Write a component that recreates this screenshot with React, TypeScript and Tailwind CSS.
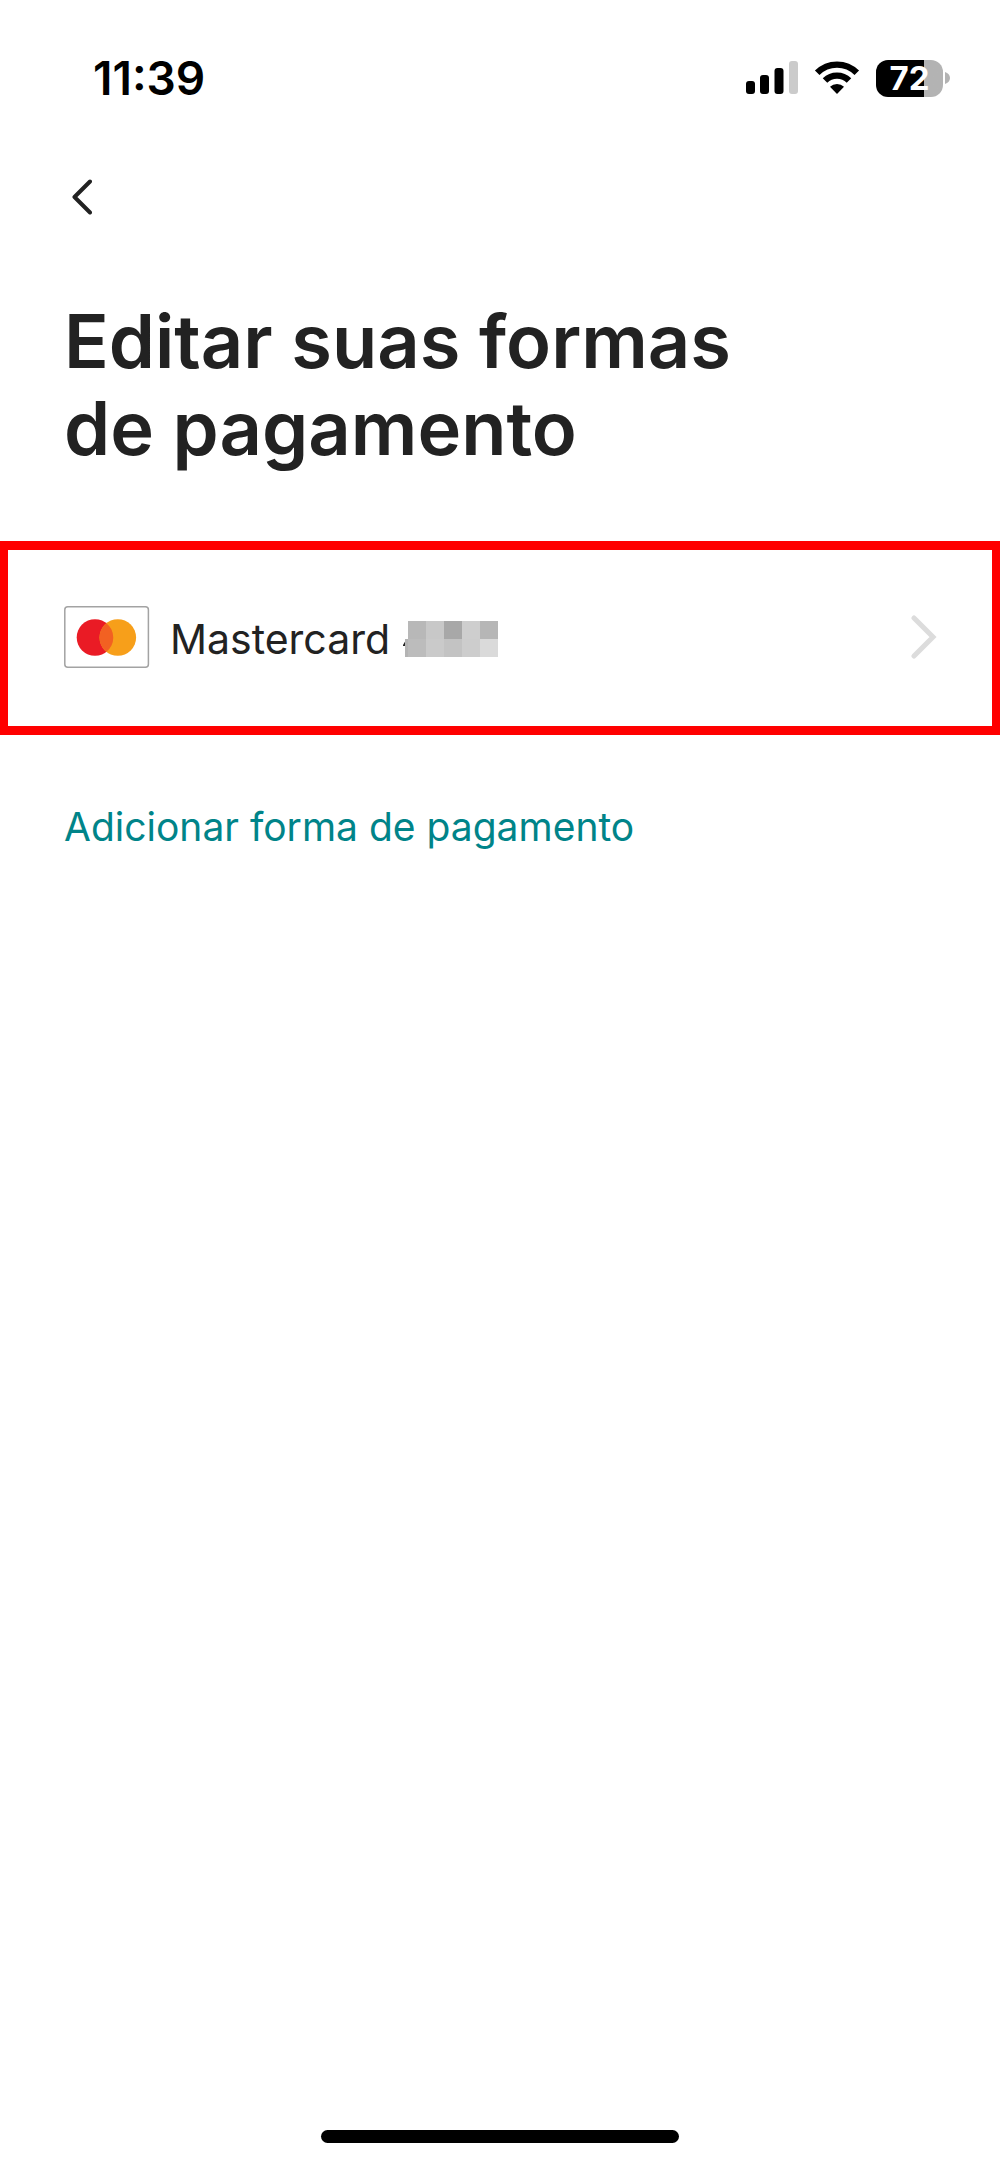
const MASK_CELLS = [
  "bg-[#b8b8b8]", "bg-[#c8c8c8]", "bg-[#a8a8a8]", "bg-[#cecece]", "bg-[#b6b6b6]",
  "bg-[#bcbcbc]", "bg-[#cacaca]", "bg-[#c3c3c3]", "bg-[#cdcdcd]", "bg-[#dadada]",
];

function SignalIcon() {
  return (
    <svg width="52" height="34" viewBox="0 0 52 34" aria-hidden="true">
      <rect x="0" y="20" width="9" height="13" rx="3" fill="#000" />
      <rect x="14" y="14" width="9" height="19" rx="3" fill="#000" />
      <rect x="28.5" y="7" width="9" height="26" rx="3" fill="#000" />
      <rect x="43" y="0" width="9" height="33" rx="3" fill="#cbcbcb" />
    </svg>
  );
}

function WifiIcon() {
  return (
    <svg width="46" height="34" viewBox="0 0 46 34" aria-hidden="true">
      <path d="M3.2 11.8a28 28 0 0 1 39.6 0" fill="none" stroke="#000" strokeWidth="6.4" />
      <path d="M11 19.6a17 17 0 0 1 24 0" fill="none" stroke="#000" strokeWidth="6.4" />
      <path d="M23 33l-7-7.2a10 10 0 0 1 14 0z" fill="#000" />
    </svg>
  );
}

function Battery({ level }: { level: number }) {
  return (
    <div className="flex items-center gap-0.5">
      <div className="grid h-[37px] w-[67px] items-center rounded-xl bg-linear-to-r from-black from-72% to-[#b3b3b3] to-72%">
        <span className="text-center text-[33px] leading-[37px] font-bold text-white">{level}</span>
      </div>
      <svg width="5" height="12" viewBox="0 0 5 12" aria-hidden="true">
        <path d="M0 0c3 1 5 3 5 6s-2 5-5 6z" fill="#b3b3b3" />
      </svg>
    </div>
  );
}

function StatusBar() {
  return (
    <div className="flex items-center justify-between pr-[50px] pl-[93px] pt-[50px]">
      <span className="text-[46px] leading-[56px] font-semibold text-black">11:39</span>
      <div className="flex items-center gap-4">
        <SignalIcon />
        <WifiIcon />
        <Battery level={72} />
      </div>
    </div>
  );
}

function MastercardIcon() {
  return (
    <svg width="86" height="62" viewBox="0 0 86 62" className="shrink-0" aria-hidden="true">
      <rect x="0.8" y="0.8" width="83.6" height="60.4" rx="3" fill="#fff" stroke="#a3a3a3" strokeWidth="1.5" />
      <circle cx="31" cy="31.5" r="18.3" fill="#ea1b25" />
      <circle cx="53.8" cy="31.5" r="18.3" fill="#f79f1a" />
      <path d="M42.4 17.2a18.3 18.3 0 0 1 0 28.6a18.3 18.3 0 0 1 0-28.6z" fill="#f26122" />
    </svg>
  );
}

function MaskedNumber() {
  return (
    <span className="relative grid grid-cols-5" aria-hidden="true">
      {MASK_CELLS.map((cell, i) => (
        <span key={i} className={`h-[18px] w-[18px] ${cell}`} />
      ))}
      <svg width="5" height="18" viewBox="0 0 5 18" className="absolute bottom-0 -left-[5px]">
        <path d="M0 6L3 1V7H0z" fill="#222" />
        <path d="M2 0H5V18H2z" fill="#b4b4b4" />
      </svg>
    </span>
  );
}

export default function App() {
  return (
    <div className="flex min-h-screen flex-col bg-white font-['Inter',sans-serif] text-[#222]">
      <StatusBar />

      <header className="px-16 pt-[66px]">
        <button type="button" aria-label="Voltar" className="flex h-[50px] w-9 items-center justify-center">
          <svg width="20" height="36" viewBox="0 0 20 36" fill="none" stroke="#222" strokeWidth="4" strokeLinecap="round" strokeLinejoin="round">
            <path d="M18 2.5L2.5 18L18 33.5" />
          </svg>
        </button>
        <h1 className="mt-[76px] text-[74px] leading-[87px] font-semibold">
          Editar suas formas
          <br />
          de pagamento
        </h1>
      </header>

      <main className="mt-[69px] flex flex-1 flex-col">
        <button type="button" className="flex h-[194px] items-center border-x-8 border-y-9 border-[#ff0000] pr-[54px] pb-0.5 pl-14 text-left">
          <MastercardIcon />
          <span className="ml-5 pt-1 text-[41px] leading-[56px]">Mastercard</span>
          <span className="ml-[18px] pt-1">
            <MaskedNumber />
          </span>
          <svg width="28" height="44" viewBox="0 0 28 44" fill="none" stroke="#dcdcdc" strokeWidth="5" strokeLinecap="round" strokeLinejoin="miter" className="ml-auto">
            <path d="M4 3L23 22L4 41" />
          </svg>
        </button>
        <a href="#adicionar" className="mx-16 mt-16 self-start text-[39px] leading-[56px] text-[#008489]">
          Adicionar forma de pagamento
        </a>
      </main>

      <footer className="flex justify-center pb-[22px]">
        <div className="h-[13px] w-[358px] rounded-full bg-black" />
      </footer>
    </div>
  );
}
